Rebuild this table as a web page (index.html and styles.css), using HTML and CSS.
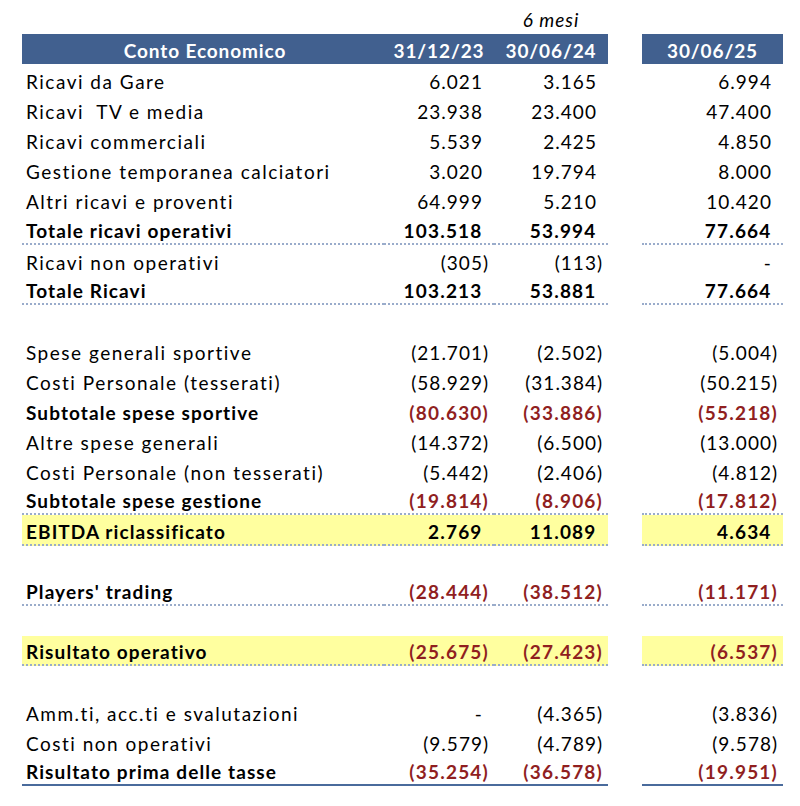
FILE: index.html
```html
<!DOCTYPE html>
<html lang="it">
<head>
<meta charset="utf-8">
<title>Conto Economico</title>
<link rel="stylesheet" href="styles.css">
</head>
<body>
<div class="sheet">
  <div class="row note">
    <div class="c lab"></div><div class="c num"></div><div class="c num center"><i>6 mesi</i></div><div class="gap"></div><div class="c num"></div>
  </div>
  <div class="row head">
    <div class="c lab">Conto Economico</div><div class="c">31/12/23</div><div class="c">30/06/24</div><div class="gap"></div><div class="c">30/06/25</div>
  </div>
  <div class="row"><div class="c lab">Ricavi da Gare</div><div class="c num">6.021<span class="p">)</span></div><div class="c num">3.165<span class="p">)</span></div><div class="gap"></div><div class="c num">6.994<span class="p">)</span></div></div>
  <div class="row"><div class="c lab">Ricavi&nbsp; TV e media</div><div class="c num">23.938<span class="p">)</span></div><div class="c num">23.400<span class="p">)</span></div><div class="gap"></div><div class="c num">47.400<span class="p">)</span></div></div>
  <div class="row"><div class="c lab">Ricavi commerciali</div><div class="c num">5.539<span class="p">)</span></div><div class="c num">2.425<span class="p">)</span></div><div class="gap"></div><div class="c num">4.850<span class="p">)</span></div></div>
  <div class="row"><div class="c lab">Gestione temporanea calciatori</div><div class="c num">3.020<span class="p">)</span></div><div class="c num">19.794<span class="p">)</span></div><div class="gap"></div><div class="c num">8.000<span class="p">)</span></div></div>
  <div class="row"><div class="c lab">Altri ricavi e proventi</div><div class="c num">64.999<span class="p">)</span></div><div class="c num">5.210<span class="p">)</span></div><div class="gap"></div><div class="c num">10.420<span class="p">)</span></div></div>
  <div class="row bold dot"><div class="c lab">Totale ricavi operativi</div><div class="c num">103.518<span class="p">)</span></div><div class="c num">53.994<span class="p">)</span></div><div class="gap"></div><div class="c num">77.664<span class="p">)</span></div></div>
  <div class="row"><div class="c lab">Ricavi non operativi</div><div class="c num">(305)</div><div class="c num">(113)</div><div class="gap"></div><div class="c num">-<span class="p">)</span></div></div>
  <div class="row bold dot"><div class="c lab">Totale Ricavi</div><div class="c num">103.213<span class="p">)</span></div><div class="c num">53.881<span class="p">)</span></div><div class="gap"></div><div class="c num">77.664<span class="p">)</span></div></div>
  <div class="row"></div>
  <div class="row"><div class="c lab">Spese generali sportive</div><div class="c num">(21.701)</div><div class="c num">(2.502)</div><div class="gap"></div><div class="c num">(5.004)</div></div>
  <div class="row"><div class="c lab">Costi Personale (tesserati)</div><div class="c num">(58.929)</div><div class="c num">(31.384)</div><div class="gap"></div><div class="c num">(50.215)</div></div>
  <div class="row bold red"><div class="c lab">Subtotale spese sportive</div><div class="c num">(80.630)</div><div class="c num">(33.886)</div><div class="gap"></div><div class="c num">(55.218)</div></div>
  <div class="row"><div class="c lab">Altre spese generali</div><div class="c num">(14.372)</div><div class="c num">(6.500)</div><div class="gap"></div><div class="c num">(13.000)</div></div>
  <div class="row"><div class="c lab">Costi Personale (non tesserati)</div><div class="c num">(5.442)</div><div class="c num">(2.406)</div><div class="gap"></div><div class="c num">(4.812)</div></div>
  <div class="row bold red dot"><div class="c lab">Subtotale spese gestione</div><div class="c num">(19.814)</div><div class="c num">(8.906)</div><div class="gap"></div><div class="c num">(17.812)</div></div>
  <div class="row bold hl dot"><div class="c lab">EBITDA riclassificato</div><div class="c num">2.769<span class="p">)</span></div><div class="c num">11.089<span class="p">)</span></div><div class="gap"></div><div class="c num">4.634<span class="p">)</span></div></div>
  <div class="row"></div>
  <div class="row bold red dot"><div class="c lab">Players' trading</div><div class="c num">(28.444)</div><div class="c num">(38.512)</div><div class="gap"></div><div class="c num">(11.171)</div></div>
  <div class="row"></div>
  <div class="row bold red hl dot"><div class="c lab">Risultato operativo</div><div class="c num">(25.675)</div><div class="c num">(27.423)</div><div class="gap"></div><div class="c num">(6.537)</div></div>
  <div class="row"></div>
  <div class="row"><div class="c lab">Amm.ti, acc.ti e svalutazioni</div><div class="c num">-<span class="p">)</span></div><div class="c num">(4.365)</div><div class="gap"></div><div class="c num">(3.836)</div></div>
  <div class="row"><div class="c lab">Costi non operativi</div><div class="c num">(9.579)</div><div class="c num">(4.789)</div><div class="gap"></div><div class="c num">(9.578)</div></div>
  <div class="row bold red solid"><div class="c lab">Risultato prima delle tasse</div><div class="c num">(35.254)</div><div class="c num">(36.578)</div><div class="gap"></div><div class="c num">(19.951)</div></div>
</div>
</body>
</html>
```

FILE: styles.css
```css
html, body {
  margin: 0;
  padding: 0;
  background: #ffffff;
}

.sheet {
  padding-left: 22px;
  font-family: Lato, "Open Sans", "Liberation Sans", sans-serif;
  font-size: 19px;
  color: #000000;
}

.row {
  display: grid;
  grid-template-columns: 362px 110px 114px 34px 141px;
  height: 30.1px;
  box-sizing: border-box;
}

.c {
  display: flex;
  align-items: flex-end;
  padding-bottom: 1px;
  box-sizing: border-box;
  white-space: pre;
  line-height: 22px;
}

.lab {
  padding-left: 4px;
  letter-spacing: 1.5px;
}

.num {
  justify-content: flex-end;
  padding-right: 5px;
  letter-spacing: 1px;
}

.p {
  visibility: hidden;
}

.note {
  height: 34px;
}

.note .c {
  padding-bottom: 3px;
}

.note i {
  letter-spacing: 1px;
}

.center {
  justify-content: center;
  padding-right: 0;
}

.head {
  height: 30px;
}

.head .c {
  background: #41608f;
  color: #ffffff;
  font-weight: 700;
  justify-content: center;
  align-items: center;
  padding-top: 3px;
  padding-bottom: 0;
  letter-spacing: 0.9px;
}

.bold .c {
  font-weight: 700;
  letter-spacing: 1.1px;
}

.bold .num {
  letter-spacing: 1.2px;
}

.red .num {
  color: #901f1f;
}

.hl .c {
  background: #ffff9f;
}

.dot .c {
  border-bottom: 2px dotted #9aaccb;
}

.solid .c {
  border-bottom: 2px solid #4a6b9c;
}
```
